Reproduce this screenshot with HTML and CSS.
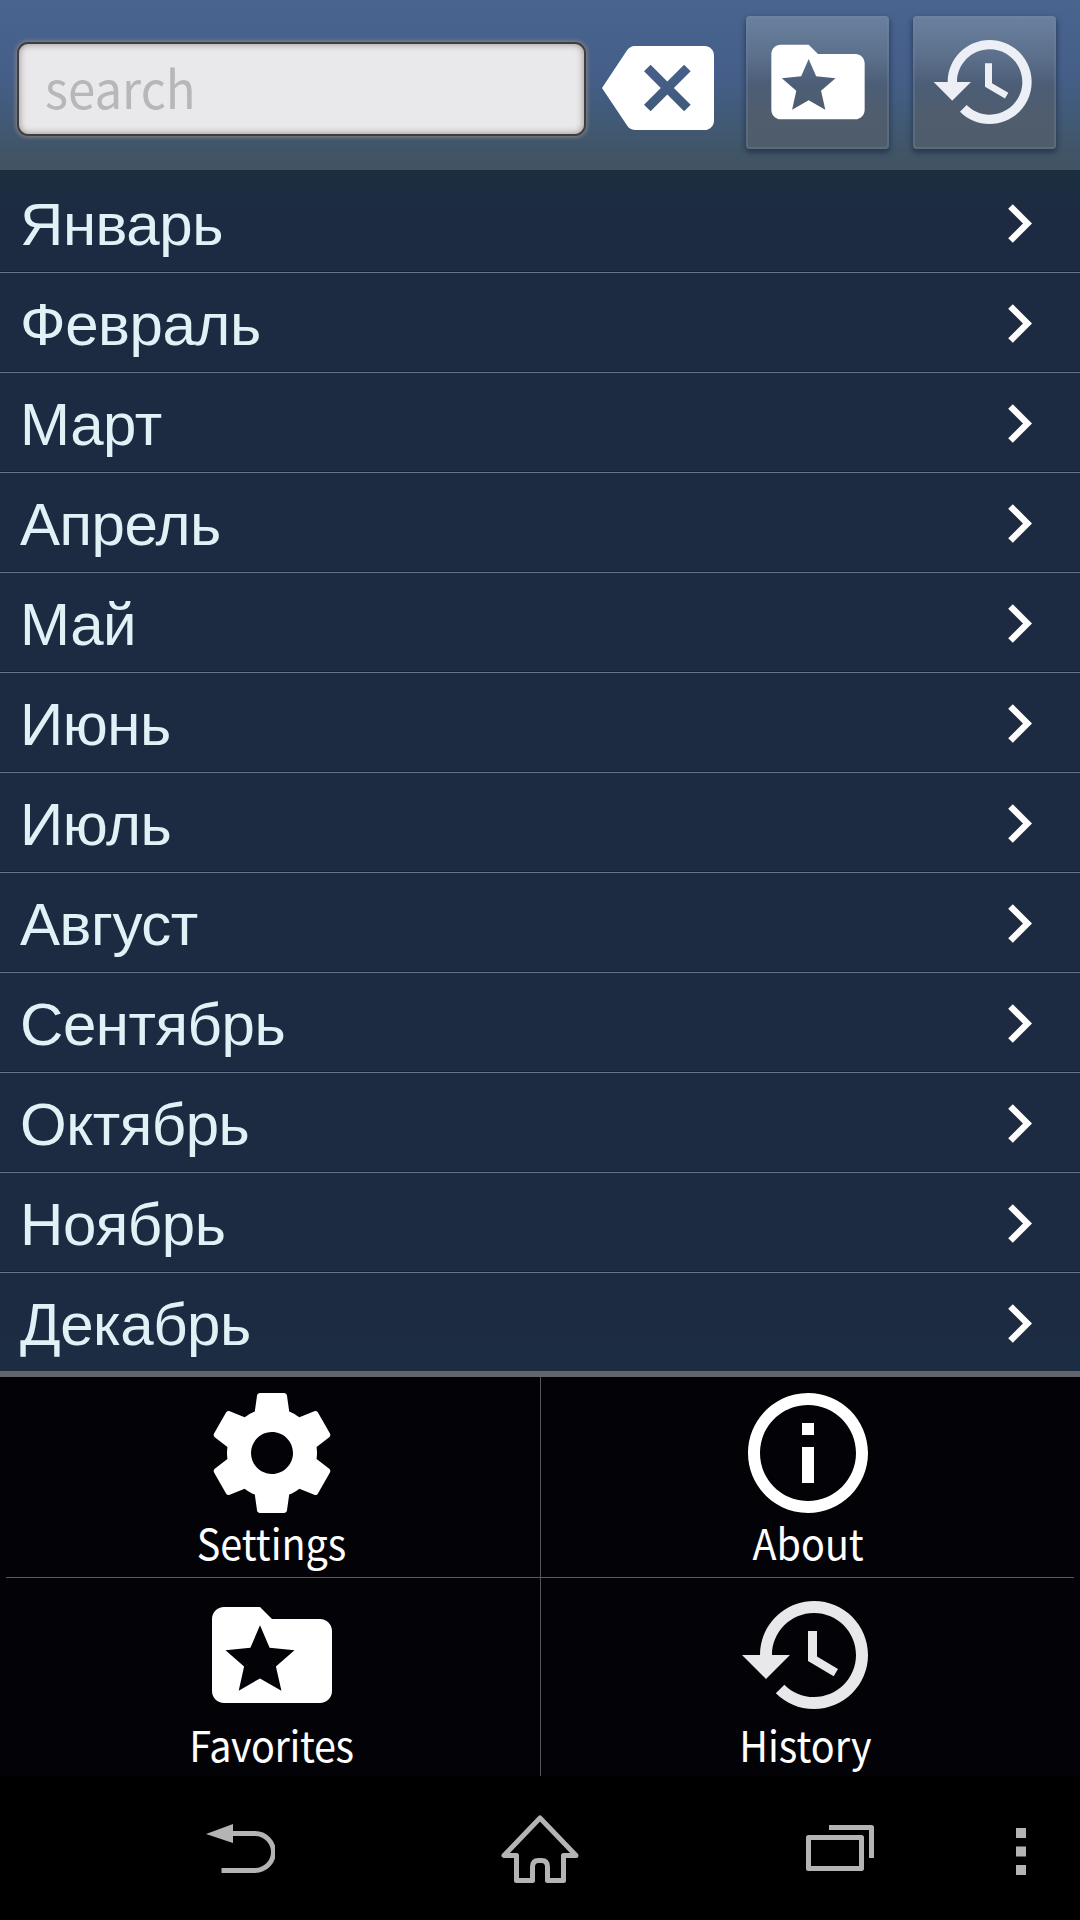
FILE: index.html
```html
<!DOCTYPE html>
<html lang="ru">
<head>
<meta charset="utf-8">
<title>Calendar</title>
<link rel="stylesheet" href="styles.css">
</head>
<body>
<svg class="defs" aria-hidden="true">
  <symbol id="folder-star" viewBox="0 0 24 24"><path fill-rule="evenodd" d="M10 4H4c-1.1 0-2 .9-2 2v12c0 1.100.9 2 2 2h16c1.100 0 2-.9 2-2V8c0-1.100-.9-2-2-2h-8l-2-2zM10 7.060l1.600 3.720 4.150.420-3.100 2.700.920 4.040L10 15.900 6.450 17.940 7.350 13.900 4.250 11.200 8.400 10.780z"/></symbol>
  <symbol id="history" viewBox="0 0 24 24"><path d="M13 3c-4.970 0-9 4.030-9 9H1l3.890 3.890.070.140L9 12H6c0-3.870 3.130-7 7-7s7 3.130 7 7-3.130 7-7 7c-1.930 0-3.680-.79-4.940-2.060l-1.420 1.420C8.270 19.990 10.510 21 13 21c4.970 0 9-4.030 9-9s-4.030-9-9-9zm-1 5v5l4.280 2.540.720-1.210-3.500-2.080V8H12z"/></symbol>
  <symbol id="chevron" viewBox="0 0 24 39"><path d="M2.500 2.500 19.500 19.500 2.500 36.500" fill="none" stroke="#fff" stroke-width="6.500"/></symbol>
</svg>
<header class="bar">
  <div class="search"><span>search</span></div>
  <svg class="clear" viewBox="0 0 24 24"><path d="M22 3H7c-.69 0-1.230.35-1.590.88L0 12l5.410 8.110c.36.53.9.89 1.590.89h15c1.100 0 2-.9 2-2V5c0-1.100-.9-2-2-2zm-3 12.590L17.590 17 14 13.410 10.410 17 9 15.590 12.590 12 9 8.410 10.410 7 14 10.590 17.590 7 19 8.410 15.410 12 19 15.590z"/></svg>
  <div class="button"><svg><use href="#folder-star"/></svg></div>
  <div class="button dim"><svg><use href="#history"/></svg></div>
</header>
<main class="list">
  <div class="row"><span>Январь</span><svg><use href="#chevron"/></svg></div>
  <div class="row"><span>Февраль</span><svg><use href="#chevron"/></svg></div>
  <div class="row"><span>Март</span><svg><use href="#chevron"/></svg></div>
  <div class="row"><span>Апрель</span><svg><use href="#chevron"/></svg></div>
  <div class="row"><span>Май</span><svg><use href="#chevron"/></svg></div>
  <div class="row"><span>Июнь</span><svg><use href="#chevron"/></svg></div>
  <div class="row"><span>Июль</span><svg><use href="#chevron"/></svg></div>
  <div class="row"><span>Август</span><svg><use href="#chevron"/></svg></div>
  <div class="row"><span>Сентябрь</span><svg><use href="#chevron"/></svg></div>
  <div class="row"><span>Октябрь</span><svg><use href="#chevron"/></svg></div>
  <div class="row"><span>Ноябрь</span><svg><use href="#chevron"/></svg></div>
  <div class="row"><span>Декабрь</span><svg><use href="#chevron"/></svg></div>
</main>
<section class="menu">
  <div class="item"><svg viewBox="0 0 24 24"><path d="M19.430 12.980c.04-.32.07-.64.07-.98s-.03-.66-.07-.98l2.110-1.650c.19-.15.24-.42.12-.64l-2-3.460c-.12-.22-.39-.3-.61-.22l-2.490 1c-.52-.4-1.080-.73-1.690-.98l-.38-2.650C14.460 2.180 14.250 2 14 2h-4c-.25 0-.46.18-.49.42l-.38 2.650c-.61.25-1.170.59-1.690.98l-2.490-1c-.23-.09-.49 0-.61.22l-2 3.460c-.13.22-.07.49.12.64l2.110 1.650c-.04.32-.07.65-.07.98s.03.66.07.98l-2.110 1.650c-.19.15-.24.42-.12.64l2 3.460c.12.22.39.3.61.22l2.490-1c.52.4 1.080.73 1.690.98l.38 2.650c.03.24.24.42.49.42h4c.25 0 .46-.18.49-.42l.38-2.650c.61-.25 1.170-.59 1.690-.98l2.490 1c.23.09.49 0 .61-.22l2-3.460c.12-.22.07-.49-.12-.64l-2.110-1.650zM12 15.500c-1.930 0-3.500-1.570-3.500-3.500s1.570-3.500 3.500-3.500 3.500 1.570 3.500 3.500-1.570 3.500-3.500 3.500z"/></svg><span>Settings</span></div>
  <div class="item"><svg viewBox="0 0 24 24"><path d="M11 17h2v-6h-2v6zm1-15C6.480 2 2 6.480 2 12s4.480 10 10 10 10-4.480 10-10S17.520 2 12 2zm0 18c-4.410 0-8-3.590-8-8s3.590-8 8-8 8 3.590 8 8-3.590 8-8 8zM11 9h2V7h-2v2z"/></svg><span>About</span></div>
  <div class="item low"><svg><use href="#folder-star"/></svg><span class="tight">Favorites</span></div>
  <div class="item low dim"><svg><use href="#history"/></svg><span class="shift">History</span></div>
</section>
<nav class="nav">
  <svg class="back" viewBox="0 0 69 50"><path d="M0 10 27 0V19z"/><path d="M26 9.500H49a18.500 18.500 0 0 1 0 37H15.500"/></svg>
  <svg class="home" viewBox="0 0 80 70"><path d="M40 4 4 41.500H16.500V66.500H32.500V53q0-6.500 6-6.500h3q6 0 6 6.500V66.500H63.500V41.500H76z"/></svg>
  <svg class="recent" viewBox="0 0 68 46"><path d="M2.500 12.500H55.500V43.500H2.500zM23 2.500H65.500V33"/></svg>
  <svg class="more" viewBox="0 0 10 47"><path class="fill" d="M0 0h10v10H0zM0 18.500h10v10H0zM0 37h10v10H0z"/></svg>
</nav>
</body>
</html>
```
FILE: styles.css
```css
* { box-sizing: border-box; }
body { margin: 0; width: 1080px; height: 1920px; background: #000; overflow: hidden; font-family: "Noto Sans CJK SC", "Open Sans", sans-serif; }
svg { display: block; fill: #fff; flex: none; }
.defs { display: none; }

.bar { height: 170px; display: flex; align-items: flex-start; padding: 16px 24px 0 17px; background: linear-gradient(#48648f 0, #455f8a 42%, #415a78 68%, #40566a 85%, #405361 100%); }
.search { width: 569px; height: 94px; margin-top: 26px; padding-left: 26px; border: 2px solid #3c3e43; border-radius: 11px; background: #e9e8ea; box-shadow: 0 0 4px 1px #8d8480, inset 0 0 6px 1px #a19c98; font-size: 52px; line-height: 86px; color: #b7b7b9; }
.search span { display: inline-block; transform: scaleX(.945); transform-origin: left; }
.clear { width: 112px; height: 112px; margin: 16px 32px 0 16px; }
.button { width: 143px; height: 133px; display: flex; align-items: center; justify-content: center; border-radius: 4px; background: linear-gradient(#6a819f 0, #5c708c 30%, #4c5d76 52%, #505d6e 75%, #4f5c6a 100%); box-shadow: inset 0 0 0 2px rgba(115, 135, 160, .35), 0 3px 5px 1px rgba(25, 40, 60, .6); }
.button + .button { margin-left: 24px; }
.button svg { width: 112px; height: 112px; margin-bottom: 1px; }
.button.dim svg { fill: #eceff5; }

.list { height: 1207px; border-bottom: 6px solid #63656e; background: linear-gradient(#1c2e40 0, #1d2b42 50px, #1d2b42 1150px, #1c2d42 1201px); }
.row { height: 100px; display: flex; justify-content: space-between; padding: 0 48px 0 20px; border-bottom: 1px solid #66748a; box-shadow: inset 0 -1px #152036; font: 60px/104px "Liberation Sans", Arial, sans-serif; letter-spacing: -.45px; color: #dff2f5; }
.row:first-child { height: 103px; padding-top: 3px; }
.row:last-child { border: 0; box-shadow: none; }
.row svg { width: 24px; height: 39px; margin-top: 31px; }

.menu { height: 399px; display: grid; grid-template: 201px 198px / 534px 534px; padding: 0 6px; background: #030307; }
.item { display: flex; flex-direction: column; align-items: center; padding: 4px 2px 0 0; border-bottom: 1px solid #5a5a5e; }
.item:nth-child(even) { padding: 4px 0 0 1px; border-left: 1px solid #55555a; }
.item svg { width: 144px; height: 144px; }
.item span { font-size: 42px; line-height: 62px; margin-top: -14px; color: #fff; transform: scaleX(.94); }
.item .tight { letter-spacing: -.4px; margin-right: 2px; }
.item .shift { margin-right: 6px; }
.item.low, .item.low:nth-child(even) { border-bottom: 0; padding-top: 5px; }
.item.dim svg { fill: #e8e8ea; }

.nav { height: 144px; display: flex; align-items: flex-start; background: #000; }
.nav path { fill: none; stroke: #b4b4b4; stroke-width: 5; stroke-linejoin: round; }
.nav .fill, .nav .back path:first-child { fill: #b4b4b4; stroke: none; }
.back { width: 69px; height: 50px; margin: 48px 0 0 206px; }
.home { width: 80px; height: 70px; margin: 38px 0 0 225px; }
.recent { width: 68px; height: 46px; margin: 49px 0 0 226px; }
.more { width: 10px; height: 47px; margin: 52px 0 0 142px; }
```
